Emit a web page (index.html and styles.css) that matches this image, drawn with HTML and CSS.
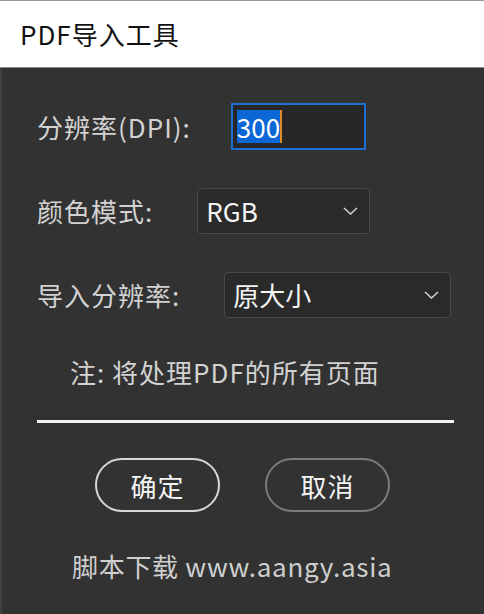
FILE: index.html
```html
<!DOCTYPE html>
<html lang="zh-CN">
<head>
    <meta charset="UTF-8">
    <title>PDF导入工具</title>
    <link rel="stylesheet" href="styles.css">
</head>
<body>
    <div class="titlebar">PDF导入工具</div>
    <div class="dialog">
        <div class="row">
            <span class="label">分辨率(DPI):</span>
            <div class="field"><span class="sel">300</span><span class="caret"></span></div>
        </div>
        <div class="row">
            <span class="label">颜色模式:</span>
            <div class="select select-mode">
                <span>RGB</span>
                <svg class="chev" width="15" height="8" viewBox="0 0 15 8"><path d="M1 1 L7.5 7 L14 1" fill="none" stroke="#cfcfcf" stroke-width="1.6"/></svg>
            </div>
        </div>
        <div class="row">
            <span class="label">导入分辨率:</span>
            <div class="select select-size">
                <span>原大小</span>
                <svg class="chev" width="15" height="8" viewBox="0 0 15 8"><path d="M1 1 L7.5 7 L14 1" fill="none" stroke="#cfcfcf" stroke-width="1.6"/></svg>
            </div>
        </div>
        <p class="note">注: 将处理PDF的所有页面</p>
        <div class="divider"></div>
        <div class="buttons">
            <button class="btn btn-ok">确定</button>
            <button class="btn btn-cancel">取消</button>
        </div>
        <p class="footer">脚本下载 www.aangy.asia</p>
    </div>
</body>
</html>
```
FILE: styles.css
```css
body {
    margin: 0;
    padding: 0;
    width: 484px;
    height: 614px;
    overflow: hidden;
    background-color: #323232;
    font-family: "Noto Sans CJK SC", "Noto Sans", sans-serif;
    font-size: 26px;
    letter-spacing: 1px;
}
.titlebar {
    height: 68px;
    box-sizing: border-box;
    background-color: #fff;
    border-top: 1px solid #9a9a9a;
    border-bottom: 1px solid #8a8a8a;
    padding-left: 20px;
    line-height: 66px;
    color: #111;
}
.dialog {
    height: 546px;
    box-sizing: border-box;
    border-left: 2px solid #404040;
    padding: 35px 0 0 35px;
    color: #d2d2d2;
}
.row {
    display: flex;
    align-items: center;
    gap: 40px;
    height: 47px;
    margin-bottom: 37px;
}
.label {
    white-space: nowrap;
}
.field {
    width: 135px;
    height: 47px;
    box-sizing: border-box;
    border: 2px solid #1c6fd4;
    background-color: #272727;
    display: flex;
    align-items: center;
    padding-left: 4px;
}
.sel {
    background-color: #0b67d6;
    color: #fff;
    line-height: 33px;
    letter-spacing: 0;
}
.caret {
    width: 2px;
    height: 33px;
    background-color: #e08a2a;
}
.select {
    height: 46px;
    box-sizing: border-box;
    border: 1px solid #4a4a4a;
    border-radius: 4px;
    background-color: #2a2a2a;
    display: flex;
    align-items: center;
    justify-content: space-between;
    padding: 0 11px 0 8px;
    color: #f4f4f4;
    letter-spacing: 0;
}
.select-mode {
    width: 173px;
    margin-left: 4px;
}
.select-size {
    width: 227px;
    margin-left: 4px;
}
.note {
    margin: 23px 0 0 33px;
    line-height: 34px;
}
.divider {
    width: 417px;
    height: 3px;
    background-color: #f2f2f2;
    margin-top: 31px;
}
.buttons {
    display: flex;
    gap: 45px;
    margin: 35px 0 0 58px;
}
.btn {
    width: 125px;
    height: 54px;
    border-radius: 27px;
    background: transparent;
    font-family: inherit;
    font-size: 26px;
    letter-spacing: 1px;
    color: #f4f4f4;
    padding: 0;
    cursor: pointer;
}
.btn-ok {
    border: 2px solid #d8d8d8;
}
.btn-cancel {
    border: 2px solid #7c7c7c;
}
.footer {
    margin: 35px 0 0 35px;
    color: #cfcfcf;
    letter-spacing: 0.7px;
}
```
